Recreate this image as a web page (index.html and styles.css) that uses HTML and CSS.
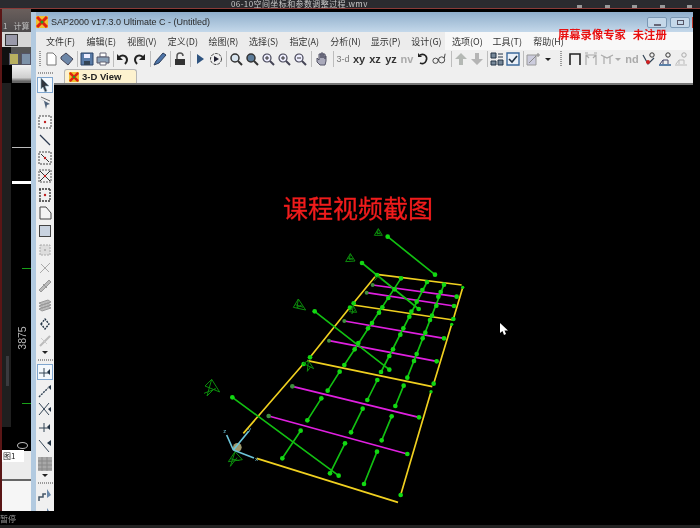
FILE: index.html
```html
<!DOCTYPE html>
<html lang="en">
  <head>
    <meta charset="UTF-8" />
    <title>SAP2000</title>
    <link rel="stylesheet" href="styles.css">
  </head>
  <body>
    <svg class="defs">
      <symbol id="logo" viewBox="0 0 12 12"><rect width="12" height="12" fill="#f0c030"/><path d="M1 1l10 10M11 1L1 11" stroke="#e02010" stroke-width="3"/><circle cx="6" cy="6" r="1.5" fill="#20a020"/></symbol>
      <symbol id="page" viewBox="0 0 14 14"><path d="M3 1h6l3 3v9H3z" fill="#fff" stroke="#777"/></symbol>
      <symbol id="tag" viewBox="0 0 14 14"><path d="M1 5l5-4 7 6-5 6-7-6z" fill="#6d87a8" stroke="#445"/></symbol>
      <symbol id="save" viewBox="0 0 14 14"><path d="M1 1h12v12H1z" fill="#5a7ca8" stroke="#2c4468"/><path d="M4 2h6v4H4z" fill="#eef"/><path d="M4 9h6v4H4z" fill="#345"/></symbol>
      <symbol id="print" viewBox="0 0 14 14"><path d="M4 1h6v4H4z" fill="#fff" stroke="#667"/><path d="M1 5h12v6H1z" fill="#8aa0b8" stroke="#556"/><path d="M4 10h6v3H4z" fill="#fff" stroke="#667"/></symbol>
      <symbol id="undo" viewBox="0 0 14 14"><path d="M3 5c4-3 8-1 8 3 0 2-1 3-2 4" fill="none" stroke="#222" stroke-width="2"/><path d="M1 2v6h6z" fill="#222"/></symbol>
      <symbol id="redo" viewBox="0 0 14 14"><path d="M11 5C7 2 3 4 3 8c0 2 1 3 2 4" fill="none" stroke="#222" stroke-width="2"/><path d="M13 2v6H7z" fill="#222"/></symbol>
      <symbol id="pencil" viewBox="0 0 14 14"><path d="M1 13l2-4 7-8 3 2-7 8z" fill="#4d74a8" stroke="#2c3e5c"/></symbol>
      <symbol id="lock" viewBox="0 0 14 14"><path d="M4 7V4a3 3 0 0 1 6 0" fill="none" stroke="#555" stroke-width="1.5"/><path d="M2 7h10v6H2z" fill="#333"/></symbol>
      <symbol id="play" viewBox="0 0 14 14"><path d="M4 2l7 5-7 5z" fill="#2f5480"/></symbol>
      <symbol id="playc" viewBox="0 0 14 14"><circle cx="7" cy="7" r="5.5" fill="none" stroke="#444" stroke-dasharray="3 1"/><path d="M5 4l5 3-5 3z" fill="#223"/></symbol>
      <symbol id="zoom" viewBox="0 0 14 14"><circle cx="6" cy="6" r="4" fill="#d8e4ee" stroke="#333" stroke-width="1.5"/><path d="M9 9l4 4" stroke="#333" stroke-width="2"/></symbol>
      <symbol id="zoomf" viewBox="0 0 14 14"><circle cx="6" cy="6" r="4" fill="#5d7c99" stroke="#333" stroke-width="1.5"/><path d="M9 9l4 4" stroke="#333" stroke-width="2"/></symbol>
      <symbol id="zplus" viewBox="0 0 14 14"><circle cx="6" cy="6" r="4" fill="#eef" stroke="#445" stroke-width="1.2"/><path d="M9 9l4 4" stroke="#445" stroke-width="2"/><path d="M4 6h4M6 4v4" stroke="#333"/></symbol>
      <symbol id="zminus" viewBox="0 0 14 14"><circle cx="6" cy="6" r="4" fill="#eef" stroke="#445" stroke-width="1.2"/><path d="M9 9l4 4" stroke="#445" stroke-width="2"/><path d="M4 6h4" stroke="#333"/></symbol>
      <symbol id="hand" viewBox="0 0 14 14"><path d="M3 6v4l3 3h5l1-4V4h-1v3-5H9v4-5H7v5-4H5v6L3 6z" fill="#aab" stroke="#556"/></symbol>
      <symbol id="rot" viewBox="0 0 14 14"><path d="M4 3c5-2 8 2 6 6-1 3-4 3-6 2" fill="none" stroke="#222" stroke-width="1.6"/><path d="M2 1v4h4z" fill="#222"/></symbol>
      <symbol id="glass" viewBox="0 0 16 14"><circle cx="4" cy="9" r="3" fill="none" stroke="#333"/><circle cx="11" cy="8" r="3.5" fill="none" stroke="#333"/><path d="M7 8h1M14 6l1-5" stroke="#333"/></symbol>
      <symbol id="up" viewBox="0 0 14 14"><path d="M7 1l6 6H9v6H5V7H1z" fill="#b4b8b4"/></symbol>
      <symbol id="down" viewBox="0 0 14 14"><path d="M7 13l6-6H9V1H5v6H1z" fill="#b4b4b4"/></symbol>
      <symbol id="grid" viewBox="0 0 14 14"><path d="M1 1h5v5H1zM8 2h5M8 5h5M1 9h5v4H1zM8 8h5v5H8z" fill="#789" stroke="#234"/></symbol>
      <symbol id="check" viewBox="0 0 14 14"><path d="M1 1h12v12H1z" fill="#eaf0f8" stroke="#3c6a9c" stroke-width="1.4"/><path d="M3 7l3 3 5-6" fill="none" stroke="#234" stroke-width="1.6"/></symbol>
      <symbol id="spark" viewBox="0 0 14 14"><path d="M1 3h9v10H1z" fill="#ccd" stroke="#999"/><path d="M3 11l7-7M12 1v4M10 3h4" stroke="#888"/></symbol>
      <symbol id="portal" viewBox="0 0 14 14"><path d="M2 13V2h10v11" fill="none" stroke="#222" stroke-width="1.6"/></symbol>
      <symbol id="portal2" viewBox="0 0 14 14"><path d="M2 13V3h10v10M2 3l3 3M12 3L9 6M1 1h3M10 1h3" fill="none" stroke="#aaa" stroke-width="1.2"/></symbol>
      <symbol id="tee" viewBox="0 0 14 14"><path d="M1 3l6 3 6-3M4 5v7M10 5v7" fill="none" stroke="#aaa" stroke-width="1.2"/></symbol>
      <symbol id="node" viewBox="0 0 14 14"><path d="M1 3l5 9 6-6" fill="none" stroke="#345" stroke-width="1.2"/><circle cx="6" cy="10" r="2" fill="#d02020"/><circle cx="10" cy="3" r="2.2" fill="none" stroke="#333"/></symbol>
      <symbol id="chart" viewBox="0 0 14 14"><path d="M1 13h12" stroke="#2c5c90" stroke-width="1.5"/><path d="M2 12l3-4h5v4M5 8v4" fill="none" stroke="#446"/><circle cx="10" cy="3" r="2.2" fill="none" stroke="#333"/></symbol>
      <symbol id="chart2" viewBox="0 0 14 14"><path d="M1 13h12M2 12l3-4h5v4M5 8v4" fill="none" stroke="#bbb"/><circle cx="10" cy="3" r="2.2" fill="none" stroke="#aaa"/></symbol>
      <symbol id="arrow" viewBox="0 0 14 14"><path d="M3 0l8 8H7l2 5-2 1-2-5-2 2z" fill="#30363e" stroke="#8ab" stroke-width=".6"/></symbol>
      <symbol id="arrow2" viewBox="0 0 14 14"><path d="M1 2l5 3 2 8 1-4 3-1z" fill="#50647c"/><path d="M3 1l9 4" stroke="#666"/></symbol>
      <symbol id="dotbox" viewBox="0 0 14 14"><rect x="1" y="1" width="12" height="12" fill="#f6f6f6" stroke="#444" stroke-dasharray="2 1"/><circle cx="7" cy="7" r="1.2" fill="#c02020"/></symbol>
      <symbol id="line" viewBox="0 0 14 14"><path d="M2 2l10 10" stroke="#2c3a50" stroke-width="1.2"/></symbol>
      <symbol id="dline" viewBox="0 0 14 14"><rect x="1" y="1" width="12" height="12" fill="none" stroke="#444" stroke-dasharray="2 1"/><path d="M3 3l8 8" stroke="#333"/><circle cx="7" cy="7" r="1.2" fill="#c02020"/></symbol>
      <symbol id="xline" viewBox="0 0 14 14"><rect x="1" y="1" width="12" height="12" fill="none" stroke="#555" stroke-dasharray="2 1"/><path d="M2 2l10 10M12 2L2 12" stroke="#333"/><circle cx="7" cy="7" r="1.2" fill="#c02020"/></symbol>
      <symbol id="bars" viewBox="0 0 14 14"><path d="M1 1h12M1 13h12M2 1v12M12 1v12" stroke="#333" stroke-dasharray="2 1" fill="none" stroke-width="1.3"/><circle cx="7" cy="7" r="1.2" fill="#c02020"/></symbol>
      <symbol id="area" viewBox="0 0 14 14"><path d="M2 1h6l5 6v6H2z" fill="#f4f4f4" stroke="#444"/></symbol>
      <symbol id="rect" viewBox="0 0 14 14"><rect x="1.500" y="1.500" width="11" height="11" fill="#c9d3e0" stroke="#444"/></symbol>
      <symbol id="grey1" viewBox="0 0 14 14"><rect x="2" y="2" width="10" height="10" fill="#ddd" stroke="#aaa" stroke-dasharray="2 1"/><circle cx="7" cy="7" r="1" fill="#aaa"/></symbol>
      <symbol id="grey2" viewBox="0 0 14 14"><path d="M2 12L12 2M3 3l8 8" stroke="#aaa"/></symbol>
      <symbol id="grey3" viewBox="0 0 14 14"><path d="M1 11L11 1l2 2L3 13zM5 5l4 4" fill="#bbb" stroke="#999"/></symbol>
      <symbol id="stack" viewBox="0 0 14 14"><path d="M1 5l9-3 3 2-9 3zM1 8l9-3 3 2-9 3zM1 11l9-3 3 2-9 3z" fill="#bbb" stroke="#999"/></symbol>
      <symbol id="chain" viewBox="0 0 14 14"><path d="M3 8l4-5 4 5-4 5z" fill="none" stroke="#234" stroke-dasharray="2 1" stroke-width="1.4"/></symbol>
      <symbol id="brush" viewBox="0 0 14 14"><path d="M2 12L12 2" stroke="#bbb" stroke-width="2"/><path d="M3 4l6 6" stroke="#ccc"/></symbol>
      <symbol id="jt" viewBox="0 0 14 14"><path d="M1 8h10M6 3v9" stroke="#345"/><path d="M12 4l-3 3 3 3z" fill="#234"/></symbol>
      <symbol id="jd" viewBox="0 0 14 14"><path d="M1 13l9-9" stroke="#345" stroke-dasharray="2 1" stroke-width="1.4"/><path d="M13 1l-3 2 3 3z" fill="#234"/></symbol>
      <symbol id="jx" viewBox="0 0 14 14"><path d="M1 1l10 12M11 1L1 13" stroke="#345"/><path d="M13 5l-3 2 3 3z" fill="#234"/></symbol>
      <symbol id="jl" viewBox="0 0 14 14"><path d="M1 1l10 12" stroke="#345"/><path d="M13 1l-4 3 4 3z" fill="#234"/></symbol>
      <symbol id="hatch" viewBox="0 0 14 14"><rect width="14" height="14" fill="#a8a8a8"/><path d="M0 4h14M0 8h14M0 12h14M4 0v14M9 0v14" stroke="#888"/></symbol>
      <symbol id="steps" viewBox="0 0 14 14"><path d="M1 13V9h4V6h3" fill="none" stroke="#456" stroke-width="1.5"/><path d="M9 1l4 6-4 3z" fill="#6a88aa"/></symbol>
    </svg>

    <div class="desktop">
      <div class="topbar">
        <span class="clip-title">06-10空间坐标和参数调整过程.wmv</span>
        <div class="top-marks"><i></i><i></i><i></i><i></i><i></i></div>
      </div>

      <!-- cad program behind the sap window -->
      <div class="back">
        <div class="back-title"><span>1</span><span>计算</span></div>
        <div class="back-tools"><i class="back-cube"></i></div>
        <div class="back-icons"><i class="yellow-ic"></i><i></i></div>
        <div class="back-gray"></div>
        <div class="back-draw">
          <div class="scroll"></div>
          <div class="white-line thin"></div>
          <div class="white-line thick"></div>
          <div class="mark mark-a"></div>
          <div class="dim">3875</div>
          <div class="mark mark-b"></div>
        </div>
        <div class="back-tab"><div class="arc"></div><span>图1</span></div>
        <div class="back-sep"></div>
        <div class="back-white"></div>
      </div>

      <div class="sap">
        <div class="titlebar">
          <svg class="logo"><use href="#logo"/></svg>
          <span class="app-name">SAP2000 v17.3.0 Ultimate C - (Untitled)</span>
          <div class="winbtns">
            <div class="winbtn"><i class="min"></i></div>
            <div class="winbtn"><i class="max"></i></div>
          </div>
          <div class="close-edge"></div>
        </div>

        <div class="menubar">
          <span>文件(F)</span><span>编辑(E)</span><span>视图(V)</span><span>定义(D)</span><span>绘图(R)</span><span>选择(S)</span><span>指定(A)</span><span>分析(N)</span><span>显示(P)</span><span>设计(G)</span><span>选项(O)</span><span>工具(T)</span><span>帮助(H)</span>
        </div>

        <div class="toolbar">
          <div class="grip"></div>
          <div class="tg first"><svg class="ic"><use href="#page"/></svg><svg class="ic"><use href="#tag"/></svg></div>
          <div class="tg"><svg class="ic"><use href="#save"/></svg><svg class="ic"><use href="#print"/></svg></div>
          <div class="tg wide"><svg class="ic"><use href="#undo"/></svg><svg class="ic"><use href="#redo"/></svg></div>
          <div class="tg"><svg class="ic"><use href="#pencil"/></svg></div>
          <div class="tg"><svg class="ic"><use href="#lock"/></svg></div>
          <div class="tg"><svg class="ic"><use href="#play"/></svg><svg class="ic"><use href="#playc"/></svg></div>
          <div class="tg wide"><svg class="ic"><use href="#zoom"/></svg><svg class="ic"><use href="#zoomf"/></svg><svg class="ic"><use href="#zplus"/></svg><svg class="ic"><use href="#zplus"/></svg><svg class="ic"><use href="#zminus"/></svg></div>
          <div class="tg wider"><svg class="ic"><use href="#hand"/></svg></div>
          <div class="tg wider">
            <span class="tx dim3">3-d</span><span class="tx">xy</span><span class="tx">xz</span><span class="tx">yz</span><span class="tx off">nv</span>
            <svg class="ic"><use href="#rot"/></svg><svg class="ic"><use href="#glass"/></svg>
          </div>
          <div class="tg"><svg class="ic"><use href="#up"/></svg><svg class="ic"><use href="#down"/></svg></div>
          <div class="tg"><svg class="ic"><use href="#grid"/></svg><svg class="ic"><use href="#check"/></svg></div>
          <div class="tg last spark-group"><svg class="ic"><use href="#spark"/></svg><i class="drop"></i></div>
          <div class="grip"></div>
          <div class="tg last portals"><svg class="ic"><use href="#portal"/></svg><svg class="ic"><use href="#portal2"/></svg><svg class="ic"><use href="#tee"/></svg><i class="drop off"></i></div>
          <div class="tg nd"><span class="tx off">nd</span></div>
          <div class="tg last"><svg class="ic"><use href="#node"/></svg><svg class="ic"><use href="#chart"/></svg><svg class="ic"><use href="#chart2"/></svg></div>
        </div>

        <div class="work">
          <div class="side">
            <div class="hgrip"></div>
            <div class="tool on"><svg class="ic"><use href="#arrow"/></svg></div>
            <div class="tool"><svg class="ic"><use href="#arrow2"/></svg></div>
            <div class="tool"><svg class="ic"><use href="#dotbox"/></svg></div>
            <div class="tool"><svg class="ic"><use href="#line"/></svg></div>
            <div class="tool"><svg class="ic"><use href="#dline"/></svg></div>
            <div class="tool"><svg class="ic"><use href="#xline"/></svg></div>
            <div class="tool"><svg class="ic"><use href="#bars"/></svg></div>
            <div class="tool"><svg class="ic"><use href="#area"/></svg></div>
            <div class="tool"><svg class="ic"><use href="#rect"/></svg></div>
            <div class="tool"><svg class="ic"><use href="#grey1"/></svg></div>
            <div class="tool"><svg class="ic"><use href="#grey2"/></svg></div>
            <div class="tool"><svg class="ic"><use href="#grey3"/></svg></div>
            <div class="tool"><svg class="ic"><use href="#stack"/></svg></div>
            <div class="tool"><svg class="ic"><use href="#chain"/></svg></div>
            <div class="tool"><svg class="ic"><use href="#brush"/></svg></div>
            <i class="sdrop"></i>
            <div class="hgrip"></div>
            <div class="tool on"><svg class="ic"><use href="#jt"/></svg></div>
            <div class="tool"><svg class="ic"><use href="#jd"/></svg></div>
            <div class="tool"><svg class="ic"><use href="#jx"/></svg></div>
            <div class="tool"><svg class="ic"><use href="#jt"/></svg></div>
            <div class="tool"><svg class="ic"><use href="#jl"/></svg></div>
            <div class="tool"><svg class="ic"><use href="#hatch"/></svg></div>
            <i class="sdrop"></i>
            <div class="hgrip"></div>
            <div class="tool"><svg class="ic"><use href="#steps"/></svg></div>
            <div class="tool"><svg class="ic"><use href="#steps"/></svg></div>
          </div>

          <div class="main">
            <div class="tabs">
              <div class="tab"><svg class="tab-logo"><use href="#logo"/></svg>3-D View</div>
            </div>
            <div class="view">
              <h1 class="shot-label">课程视频截图</h1>

              <!-- model, coords are 3x page px starting at page 190,220 -->
              <svg class="model" viewBox="0 0 870 870">
                <g class="yellow">
                  <path d="M200 715L624 847"/>
                  <path d="M632 825L723 515M731 491L785 313M790 297L818 203"/>
                  <path d="M160 640L340 432M360 412L480 262M490 250L555 170"/>
                  <path d="M560 163L815 195M490 255L790 300M352 422L727 500"/>
                </g>
                <g class="magenta">
                  <path d="M548 195L800 230M530 218L792 258M463 303L762 355M417 362L740 424M307 499L687 592M236 588L652 702"/>
                </g>
                <g class="green">
                  <path d="M593 50L735 164M516 129L686 267M374 274L598 449M127 532L446 767"/>
                  <path d="M633 175L463 435M449 455L413 512M394 535L352 601M332 632L277 715"/>
                  <path d="M711 186L573 456M562 480L532 540M518 566L483 637M465 670L420 760"/>
                  <path d="M762 194L652 473M641 497L616 558M605 589L575 661M561 695L522 792"/>
                </g>
                <g class="dots">
                  <circle cx="593" cy="50" r="7"/><circle cx="735" cy="164" r="7"/><circle cx="516" cy="129" r="7"/><circle cx="686" cy="267" r="7"/><circle cx="374" cy="274" r="7"/><circle cx="598" cy="449" r="7"/><circle cx="127" cy="532" r="7"/><circle cx="446" cy="767" r="7"/>
                  <circle cx="633" cy="175" r="7"/><circle cx="614" cy="208" r="7"/><circle cx="595" cy="234" r="7"/><circle cx="577" cy="262" r="7"/><circle cx="567" cy="278" r="7"/><circle cx="546" cy="309" r="7"/><circle cx="534" cy="325" r="7"/><circle cx="505" cy="369" r="7"/><circle cx="494" cy="388" r="7"/><circle cx="463" cy="435" r="7"/><circle cx="449" cy="455" r="7"/><circle cx="413" cy="512" r="7"/><circle cx="394" cy="535" r="7"/><circle cx="352" cy="601" r="7"/><circle cx="332" cy="632" r="7"/><circle cx="277" cy="715" r="7"/>
                  <circle cx="711" cy="186" r="7"/><circle cx="697" cy="210" r="7"/><circle cx="680" cy="245" r="7"/><circle cx="664" cy="275" r="7"/><circle cx="658" cy="290" r="7"/><circle cx="640" cy="325" r="7"/><circle cx="631" cy="344" r="7"/><circle cx="609" cy="388" r="7"/><circle cx="598" cy="408" r="7"/><circle cx="573" cy="456" r="7"/><circle cx="562" cy="480" r="7"/><circle cx="532" cy="540" r="7"/><circle cx="518" cy="566" r="7"/><circle cx="483" cy="637" r="7"/><circle cx="465" cy="670" r="7"/><circle cx="420" cy="760" r="7"/>
                  <circle cx="762" cy="194" r="7"/><circle cx="752" cy="216" r="7"/><circle cx="745" cy="230" r="7"/><circle cx="739" cy="257" r="7"/><circle cx="726" cy="287" r="7"/><circle cx="720" cy="300" r="7"/><circle cx="706" cy="338" r="7"/><circle cx="698" cy="355" r="7"/><circle cx="680" cy="402" r="7"/><circle cx="672" cy="423" r="7"/><circle cx="652" cy="473" r="7"/><circle cx="641" cy="497" r="7"/><circle cx="616" cy="558" r="7"/><circle cx="605" cy="589" r="7"/><circle cx="575" cy="661" r="7"/><circle cx="561" cy="695" r="7"/><circle cx="522" cy="792" r="7"/>
                  <circle cx="561" cy="165" r="7"/><circle cx="491" cy="250" r="7"/><circle cx="480" cy="263" r="7"/><circle cx="360" cy="412" r="7"/><circle cx="341" cy="432" r="7"/><circle cx="818" cy="202" r="5"/><circle cx="790" cy="297" r="7"/><circle cx="785" cy="313" r="5"/><circle cx="731" cy="491" r="7"/><circle cx="723" cy="515" r="5"/><circle cx="632" cy="825" r="7"/>
                  <circle cx="800" cy="230" r="7"/><circle cx="792" cy="258" r="7"/><circle cx="762" cy="355" r="7"/><circle cx="740" cy="424" r="7"/><circle cx="687" cy="592" r="7"/><circle cx="652" cy="702" r="7"/>
                </g>
                <g class="dots dim-dots">
                  <circle cx="548" cy="195" r="6"/><circle cx="530" cy="218" r="6"/><circle cx="463" cy="303" r="6"/><circle cx="417" cy="362" r="6"/><circle cx="307" cy="499" r="7"/><circle cx="236" cy="588" r="7"/>
                </g>
                <g class="supports">
                  <path d="M553 46l12-20 12 20zM565 26l-3 16 8-4M558 38l14 4"/>
                  <path d="M467 125l14-24 14 22zM481 101l-3 18 10-4M473 114l16 4"/>
                  <path d="M310 262l15-25 22 33zM325 237l-4 26 14-8M316 254l24 8"/>
                  <path d="M340 430l15-8 16 24zM355 422l-3 32 10-14"/>
                  <path d="M45 498l20-20 24 38zM65 478l-14 50 22-22M42 520l36-14"/>
                  <path d="M115 725l20-30 22 24zM135 695l-14 44 20-26M120 716l28 6"/>
                  <path d="M478 275l12-18 10 20zM490 257l-4 24 8-10"/>
                  <path d="M553 182l12-14 12 14"/>
                </g>
                <circle class="ball" cx="142" cy="682" r="13"/>
                <g class="axes">
                  <path d="M130 690L110 645M130 690L176 634M130 690L192 714"/>
                  <text x="100" y="640">z</text>
                  <text x="174" y="632">y</text>
                  <text x="195" y="724">x</text>
                </g>
              </svg>

              <svg class="pointer" viewBox="0 0 9 12"><path d="M0 0v10l2.500-2 1.500 4 2-1-1.500-3.500H8z"/></svg>
            </div>
          </div>
        </div>
      </div>

      <div class="watermark">屏幕录像专家<span>未注册</span></div>
      <div class="status">暂停</div>
      <div class="bottom-strip"></div>
    </div>
  </body>
</html>
```

FILE: styles.css
```css
html,
body {
  margin: 0;
  padding: 0;
  background-color: #000;
}
.defs {
  position: absolute;
  width: 0;
  height: 0;
}
.desktop {
  position: relative;
  width: 700px;
  height: 528px;
  overflow: hidden;
  background-color: #000;
  font-family: "Noto Sans CJK SC", "Liberation Sans", sans-serif;
  filter: blur(0.35px);
}
.topbar {
  height: 8px;
  background-color: #2b2b2f;
  border-bottom: 1px solid #8a3b38;
  overflow: hidden;
  position: relative;
}
.clip-title {
  position: absolute;
  left: 231px;
  top: 0;
  font-size: 8px;
  line-height: 8px;
  letter-spacing: 0.4px;
  color: #c8c8c8;
  white-space: nowrap;
}
.top-marks {
  position: absolute;
  left: 577px;
  right: 8px;
  bottom: 0;
  display: flex;
  justify-content: space-between;
}
.top-marks i {
  width: 5px;
  height: 3px;
  background-color: #999;
}

/* window behind */
.back {
  position: absolute;
  left: 0;
  top: 9px;
  width: 31px;
  height: 502px;
  display: flex;
  flex-direction: column;
  border-left: 2px solid #5a1616;
  box-sizing: border-box;
}
.back-title {
  height: 23px;
  background: linear-gradient(#6a5f5c, #4d4a4c);
  color: #bbb;
  font-size: 8px;
  display: flex;
  align-items: flex-end;
  gap: 6px;
  padding-left: 1px;
  box-sizing: border-box;
  line-height: 13px;
  white-space: nowrap;
}
.back-tools {
  height: 15px;
  background-color: #d6d6d6;
  padding: 2px 0 0 3px;
  box-sizing: border-box;
}
.back-cube {
  display: block;
  width: 11px;
  height: 10px;
  border: 1px solid #333;
  background-color: #99a;
}
.back-icons {
  height: 18px;
  display: flex;
  justify-content: flex-end;
  gap: 2px;
  padding: 6px 0 0 0;
  box-sizing: border-box;
  background: linear-gradient(90deg, #111 0 9px, #555 9px);
}
.back-icons i {
  width: 8px;
  height: 10px;
  background-color: #7d92a8;
  border: 1px solid #556;
}
.back-icons .yellow-ic {
  background-color: #b8b060;
}
.back-gray {
  height: 18px;
  margin-left: 10px;
  background: linear-gradient(#f2f2f2, #cfcfcf 70%, #666 90%);
}
.back-draw {
  position: relative;
  height: 344px;
  background: linear-gradient(90deg, #1f1f1f 0 9px, #000 9px);
}
.scroll {
  position: absolute;
  left: 4px;
  top: 273px;
  width: 3px;
  height: 30px;
  background-color: #3a3a3e;
}
.white-line {
  position: absolute;
  left: 10px;
  right: 0;
  background-color: #bbb;
}
.white-line.thin {
  top: 64px;
  height: 1px;
}
.white-line.thick {
  top: 98px;
  height: 3px;
  background-color: #fff;
}
.mark {
  position: absolute;
  left: 20px;
  right: 0;
  height: 1px;
  background-color: #18a018;
}
.mark-a {
  top: 185px;
}
.mark-b {
  top: 320px;
}
.dim {
  position: absolute;
  left: 8px;
  top: 249px;
  color: #b8b8b8;
  font-family: "Liberation Sans", sans-serif;
  font-size: 10.5px;
  line-height: 12px;
  transform: rotate(-90deg);
  transform-origin: center;
}
.back-tab {
  position: relative;
  height: 52px;
  background: linear-gradient(#000 0 24px, #ececec 24px);
  color: #222;
  font-size: 8px;
  line-height: 12px;
  display: flex;
  align-items: flex-end;
  padding-bottom: 17px;
  box-sizing: border-box;
}
.back-tab span {
  padding: 0 9px 0 1px;
  background-color: #fff;
}
.arc {
  position: absolute;
  left: 15px;
  top: 15px;
  width: 9px;
  height: 5px;
  border: 1px solid #bbb;
  border-radius: 50%;
}
.back-sep {
  height: 2px;
  background-color: #666;
}
.back-white {
  flex: 1;
  background-color: #f6f6f6;
}

/* sap window */
.sap {
  position: absolute;
  left: 31px;
  top: 12px;
  width: 662px;
  height: 499px;
  display: flex;
  flex-direction: column;
  border-left: 5px solid #b2cae0;
  box-sizing: border-box;
}
.titlebar {
  height: 20px;
  display: flex;
  align-items: center;
  position: relative;
  background: linear-gradient(#8faecb, #c4d8ea);
}
.logo {
  width: 12px;
  height: 12px;
  margin-right: 3px;
}
.app-name {
  font-family: "Liberation Sans", sans-serif;
  font-size: 9px;
  color: #2a2a2a;
  white-space: nowrap;
}
.winbtns {
  position: absolute;
  right: 3px;
  top: 5px;
  display: flex;
  gap: 3px;
}
.winbtn {
  width: 20px;
  height: 11px;
  border: 1px solid #7b98b4;
  border-radius: 2px;
  background-color: #c5d8e9;
  box-sizing: border-box;
  position: relative;
}
.winbtn .min {
  position: absolute;
  left: 6px;
  bottom: 1px;
  width: 7px;
  height: 2px;
  background-color: #fff;
  border: 1px solid #667;
  box-sizing: border-box;
}
.winbtn .max {
  position: absolute;
  left: 6px;
  top: 2px;
  width: 7px;
  height: 5px;
  border: 1px solid #556;
  box-sizing: border-box;
}
.close-edge {
  position: absolute;
  right: 0;
  top: 5px;
  width: 1px;
  height: 11px;
  background-color: #c0392b;
}
.menubar {
  height: 18px;
  display: flex;
  align-items: center;
  padding-left: 10px;
  background: linear-gradient(90deg, #ececec 0 409px, #f8f8f8 409px);
  font-size: 9px;
  color: #333;
}
.menubar span {
  width: 40.6px;
  flex: none;
  white-space: nowrap;
}
.toolbar {
  height: 18px;
  display: flex;
  align-items: center;
  padding-left: 3px;
  background-color: #efefef;
}
.grip {
  width: 2px;
  height: 16px;
  flex: none;
  background-image: linear-gradient(#999 50%, transparent 50%);
  background-size: 2px 2px;
}
.tg {
  display: flex;
  align-items: center;
  height: 16px;
  flex: none;
  padding: 0 2px 0 1px;
  border-right: 1px solid #bdbdbd;
}
.tg.first {
  padding-left: 2px;
}
.tg.wide {
  padding-right: 3px;
}
.tg.wider {
  padding-right: 4px;
}
.tg.last {
  border-right: 0;
  padding-right: 4px;
}
.tg.spark-group {
  padding-right: 9px;
}
.tg.portals {
  padding: 0 0 0 5px;
}
.tg.nd {
  padding: 0;
  border-right: 0;
}
.ic {
  width: 14px;
  height: 14px;
  margin: 0 1px;
  flex: none;
}
.tx {
  width: 16px;
  flex: none;
  text-align: center;
  font-family: "Liberation Sans", sans-serif;
  font-size: 11px;
  font-weight: bold;
  color: #333;
}
.tx.dim3 {
  font-size: 9px;
  font-weight: normal;
  color: #777;
}
.tx.off {
  color: #aaa;
}
.drop {
  width: 0;
  height: 0;
  margin-left: 4px;
  border: 3px solid transparent;
  border-top: 3px solid #222;
  border-bottom: 0;
}
.drop.off {
  margin-left: 0;
  margin-right: 3px;
  border-top-color: #aaa;
}
.work {
  flex: 1;
  display: flex;
  min-height: 0;
}
.side {
  width: 18px;
  flex: none;
  background-color: #f0f0f0;
  display: flex;
  flex-direction: column;
  align-items: center;
  overflow: hidden;
  padding-top: 3px;
  box-sizing: border-box;
}
.hgrip {
  width: 15px;
  height: 2px;
  flex: none;
  margin: 1px 0 3px;
  background-image: linear-gradient(90deg, #999 50%, transparent 50%);
  background-size: 2px 2px;
}
.tool {
  width: 16px;
  height: 16px;
  flex: none;
  margin-bottom: 2.3px;
  display: flex;
  align-items: center;
  justify-content: center;
  box-sizing: border-box;
}
.tool .ic {
  margin: 0;
}
.tool.on {
  border: 1px solid #7fa6cf;
  background-color: #f4f8fc;
}
.sdrop {
  width: 0;
  height: 0;
  flex: none;
  margin: 0 0 4px;
  border: 3px solid transparent;
  border-top: 3px solid #222;
  border-bottom: 0;
}
.main {
  flex: 1;
  display: flex;
  flex-direction: column;
  min-width: 0;
}
.tabs {
  height: 17px;
  display: flex;
  align-items: flex-end;
  padding-left: 10px;
  background-color: #efefef;
  border-bottom: 2px solid #777;
  box-sizing: border-box;
  flex: none;
}
.tab {
  width: 73px;
  height: 14px;
  display: flex;
  align-items: center;
  background-color: #fdf2cf;
  border: 1px solid #b5b5b5;
  border-bottom: 0;
  border-radius: 3px 3px 0 0;
  box-sizing: border-box;
  font-family: "Liberation Sans", sans-serif;
  font-weight: bold;
  font-size: 9.5px;
  color: #222;
  white-space: nowrap;
  padding-left: 4px;
}
.tab-logo {
  width: 10px;
  height: 10px;
  margin-right: 3px;
  flex: none;
}
.view {
  flex: 1;
  position: relative;
  background-color: #000;
  overflow: hidden;
}
.shot-label {
  position: absolute;
  left: 229px;
  top: 107px;
  margin: 0;
  font-size: 25px;
  line-height: 30px;
  font-weight: normal;
  color: #f01c1c;
  white-space: nowrap;
  -webkit-text-stroke: 0.3px #f01c1c;
}
.model {
  position: absolute;
  left: 136px;
  top: 135px;
  width: 290px;
  height: 290px;
}
.model path {
  fill: none;
}
.yellow path {
  stroke: #f0d020;
  stroke-width: 5;
}
.magenta path {
  stroke: #e020e0;
  stroke-width: 5;
}
.green path {
  stroke: #12c012;
  stroke-width: 5;
}
.dots circle {
  fill: #12d812;
}
.dots.dim-dots circle {
  fill: #3f8f3f;
}
.supports path {
  stroke: #0c8c0c;
  stroke-width: 3;
}
.ball {
  fill: #a09a6c;
}
.axes path {
  stroke: #6cc4d8;
  stroke-width: 5;
}
.axes text {
  fill: #6cc4d8;
  font-family: "Liberation Sans", sans-serif;
  font-size: 18px;
}
.pointer {
  position: absolute;
  left: 446px;
  top: 238px;
  width: 9px;
  height: 12px;
}
.pointer path {
  fill: #fff;
}
.watermark {
  position: absolute;
  left: 558px;
  top: 26px;
  color: #e81010;
  font-size: 11.3px;
  font-weight: bold;
  line-height: 16px;
  white-space: nowrap;
}
.watermark span {
  margin-left: 7px;
}
.status {
  position: absolute;
  left: 0;
  top: 513px;
  color: #999;
  font-size: 8px;
  line-height: 12px;
}
.bottom-strip {
  position: absolute;
  left: 0;
  right: 0;
  bottom: 0;
  height: 3px;
  background-color: #222;
}
```
